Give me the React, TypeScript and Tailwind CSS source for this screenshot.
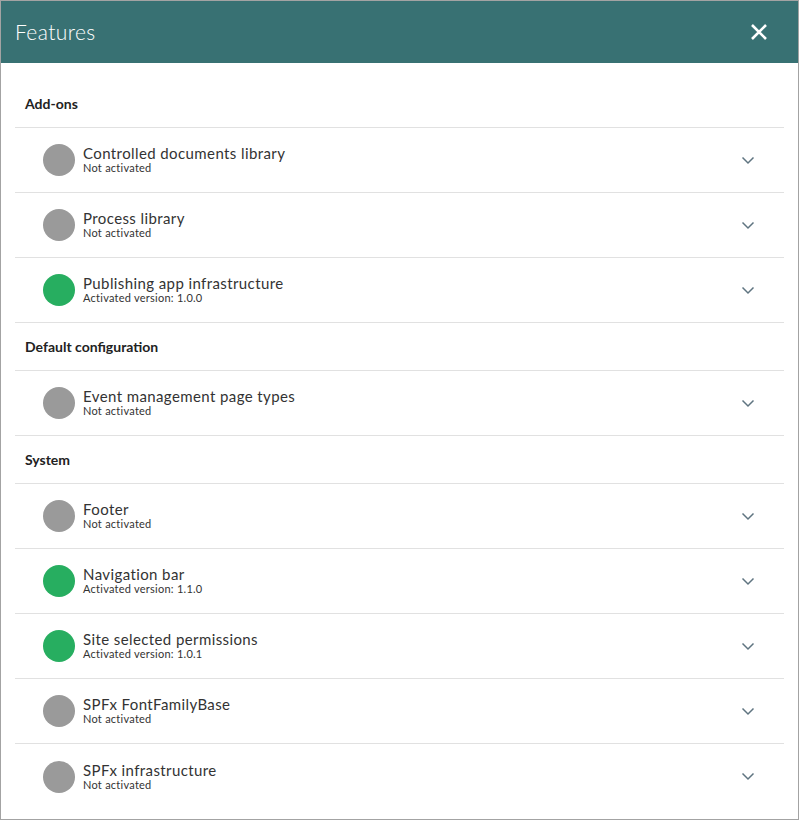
const font = { fontFamily: 'Lato, "Open Sans", sans-serif' }

interface Feature {
  name: string
  active: boolean
  version?: string
}

const sections: { title: string; items: Feature[] }[] = [
  {
    title: 'Add-ons',
    items: [
      { name: 'Controlled documents library', active: false },
      { name: 'Process library', active: false },
      { name: 'Publishing app infrastructure', active: true, version: '1.0.0' },
    ],
  },
  {
    title: 'Default configuration',
    items: [{ name: 'Event management page types', active: false }],
  },
  {
    title: 'System',
    items: [
      { name: 'Footer', active: false },
      { name: 'Navigation bar', active: true, version: '1.1.0' },
      { name: 'Site selected permissions', active: true, version: '1.0.1' },
      { name: 'SPFx FontFamilyBase', active: false },
      { name: 'SPFx infrastructure', active: false },
    ],
  },
]

function Chevron() {
  return (
    <svg width="14" height="9" viewBox="0 0 14 9" fill="none">
      <path d="M1.5 1.5L7 7L12.5 1.5" stroke="#5f7480" strokeWidth="1.5" />
    </svg>
  )
}

function FeatureRow({ item, last }: { item: Feature; last: boolean }) {
  return (
    <div className={`flex items-center h-[65px] pl-[28px] pr-[29px] ${last ? '' : 'border-b border-[#e1e1e1]'}`}>
      <div className={`w-8 h-8 rounded-full shrink-0 ${item.active ? 'bg-[#27ae60]' : 'bg-[#9a9a9a]'}`} />
      <div className="flex flex-col ml-2 flex-1 -mt-[1px]">
        <span className="text-[15px] leading-[17px] text-[#333] tracking-[0.4px]">{item.name}</span>
        <span className="text-[11px] leading-[12px] text-[#333] tracking-[0.25px]">
          {item.active ? `Activated version: ${item.version}` : 'Not activated'}
        </span>
      </div>
      <Chevron />
    </div>
  )
}

export default function App() {
  return (
    <div className="w-[799px] h-[820px] border border-[#a3a3a3] bg-white flex flex-col overflow-hidden" style={font}>
      <div className="h-[62px] bg-[#387173] flex items-center justify-between pl-[14px] pr-[30px] shrink-0">
        <span className="text-white text-[21px] font-light tracking-[0.4px]">Features</span>
        <svg width="18" height="18" viewBox="0 0 18 18">
          <path d="M2 2L16 16M16 2L2 16" stroke="white" strokeWidth="2.6" />
        </svg>
      </div>
      <div className="px-[14px] pt-[17px]">
        {sections.map((s) => (
          <div key={s.title}>
            <div className="h-[48px] flex items-center pl-[10px] border-b border-[#e1e1e1]">
              <span className="text-[14px] font-bold text-[#222]">{s.title}</span>
            </div>
            {s.items.map((it, i) => (
              <FeatureRow key={it.name} item={it} last={s.title === 'System' && i === s.items.length - 1} />
            ))}
          </div>
        ))}
      </div>
    </div>
  )
}
